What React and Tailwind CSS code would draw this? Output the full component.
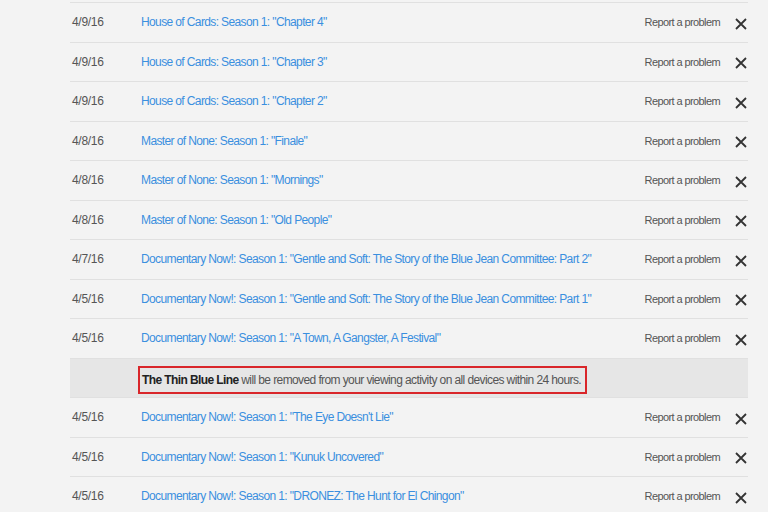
import React from "react";

const rows = [
  ["4/9/16", 'House of Cards: Season 1: "Chapter 4"'],
  ["4/9/16", 'House of Cards: Season 1: "Chapter 3"'],
  ["4/9/16", 'House of Cards: Season 1: "Chapter 2"'],
  ["4/8/16", 'Master of None: Season 1: "Finale"'],
  ["4/8/16", 'Master of None: Season 1: "Mornings"'],
  ["4/8/16", 'Master of None: Season 1: "Old People"'],
  ["4/7/16", 'Documentary Now!: Season 1: "Gentle and Soft: The Story of the Blue Jean Committee: Part 2"'],
  ["4/5/16", 'Documentary Now!: Season 1: "Gentle and Soft: The Story of the Blue Jean Committee: Part 1"'],
  ["4/5/16", 'Documentary Now!: Season 1: "A Town, A Gangster, A Festival"'],
  null,
  ["4/5/16", 'Documentary Now!: Season 1: "The Eye Doesn\'t Lie"'],
  ["4/5/16", 'Documentary Now!: Season 1: "Kunuk Uncovered"'],
  ["4/5/16", 'Documentary Now!: Season 1: "DRONEZ: The Hunt for El Chingon"'],
];

function XIcon() {
  return (
    <svg width="12" height="12" viewBox="0 0 12 12" className="text-[#333]">
      <path d="M1 1 L11 11 M11 1 L1 11" stroke="currentColor" strokeWidth="1.8" strokeLinecap="butt" />
    </svg>
  );
}

export default function App() {
  return (
    <div
      className="w-[768px] h-[512px] overflow-hidden bg-[#f3f3f3] pt-[2px]"
      style={{ fontFamily: '"Liberation Sans", Arial, sans-serif' }}
    >
      <div className="ml-[70px] w-[678px] border-t border-[#e0e0e0]">
        {rows.map((r, i) =>
          r ? (
            <div key={i} className="h-[39.5px] border-b border-[#e0e0e0] flex items-center text-[12px]">
              <div className="w-[71px] pl-[2px] text-[#555] tracking-[-0.3px]">{r[0]}</div>
              <div className="flex-1 text-[#3a8fdf] tracking-[-0.62px] whitespace-nowrap">{r[1]}</div>
              <div className="text-[11px] text-[#555] tracking-[-0.6px] mr-[15px]">Report a problem</div>
              <div className="w-[12px] mr-[1px] flex items-center mt-[3px]"><XIcon /></div>
            </div>
          ) : (
            <div key={i} className="h-[39.5px] border-b border-[#e0e0e0] bg-[#e6e6e6] flex items-center">
              <div className="ml-[68px] mt-[4px] border-2 border-[#d9262a] pl-[2px] pr-[4px] h-[28px] flex items-center text-[12px] text-[#555] tracking-[-0.6px] whitespace-nowrap">
                <span className="font-bold text-[#222]">The Thin Blue Line</span>&nbsp;will be removed from your viewing activity on all devices within 24 hours.
              </div>
            </div>
          )
        )}
      </div>
    </div>
  );
}
